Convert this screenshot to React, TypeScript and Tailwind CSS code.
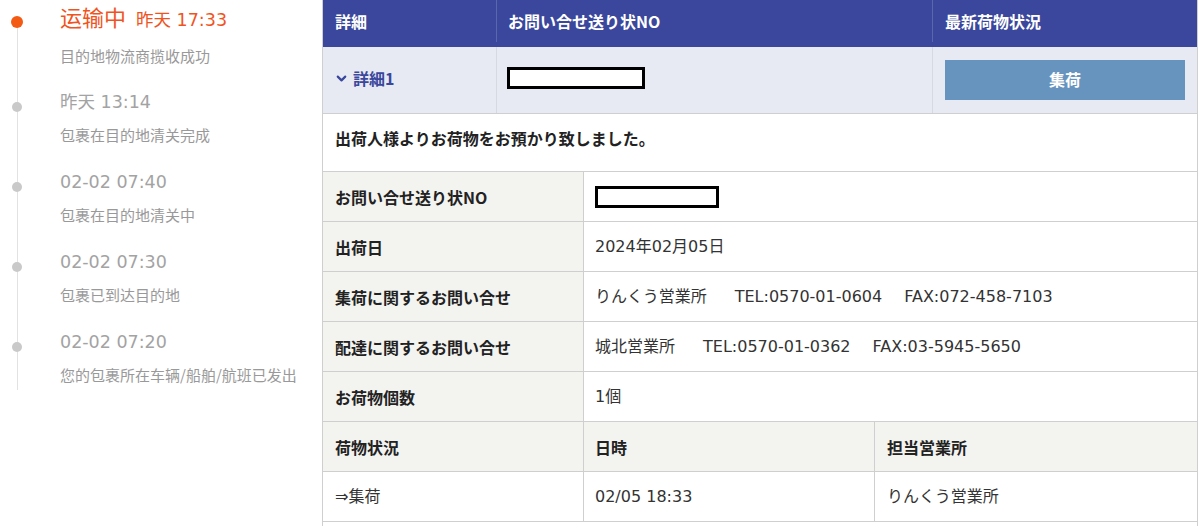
import { ChevronDown } from 'lucide-react'

const jp = { fontFamily: '"Noto Sans CJK JP", "Noto Sans", sans-serif' }
const sc = { fontFamily: '"Noto Sans CJK SC", "Noto Sans", sans-serif' }
// digits in the source are wide, closer to Verdana than Noto
const num = { fontFamily: '"DejaVu Sans", "Noto Sans CJK JP", sans-serif' }
const numSc = { fontFamily: '"DejaVu Sans", "Noto Sans CJK SC", sans-serif' }

const steps = [
  { time: '昨天 13:14', desc: '包裹在目的地清关完成' },
  { time: '02-02 07:40', desc: '包裹在目的地清关中' },
  { time: '02-02 07:30', desc: '包裹已到达目的地' },
  { time: '02-02 07:20', desc: '您的包裹所在车辆/船舶/航班已发出' },
]

function Timeline() {
  return (
    <div className="relative w-[322px] shrink-0" style={sc}>
      {/* line */}
      <div className="absolute left-[17px] top-[22px] h-[368px] w-px bg-[#e2e2e2]" />
      <div className="relative h-[88px] pl-[60px]">
        <span className="absolute left-[11px] top-[16px] h-3 w-3 rounded-full bg-[#f35a14]" />
        <div className="flex items-baseline pt-[2px] leading-[28px] text-[#f0541e]">
          <span className="text-[22px]">运输中</span>
          <span className="ml-[10px] text-[17.5px]" style={numSc}>昨天 17:33</span>
        </div>
        <p className="mt-[12px] text-[15px] leading-[20px] text-[#999]">目的地物流商揽收成功</p>
      </div>
      {steps.map((s) => (
        <div key={s.time} className="relative h-[80px] pl-[60px]">
          <span className="absolute left-[12px] top-[14px] h-[10px] w-[10px] rounded-full bg-[#c9c9c9]" />
          <p className="text-[17.5px] leading-[28px] text-[#a3a3a3]" style={numSc}>{s.time}</p>
          <p className="mt-[9px] text-[15px] leading-[20px] text-[#999]">{s.desc}</p>
        </div>
      ))}
    </div>
  )
}

function Redacted({ w }: { w: string }) {
  return <span className={`block h-[22px] ${w} border-[3px] border-black bg-white`} />
}

function DetailRow({ label, children }: { label: string; children: React.ReactNode }) {
  return (
    <div className="flex h-[50px] border-b border-[#cfcfcf]">
      <div className="flex w-[261px] shrink-0 items-center border-r border-[#cfcfcf] bg-[#f3f3f0] px-[12px] text-[16px] font-bold text-[#222]">
        {label}
      </div>
      <div className="flex flex-1 items-center px-[11px] text-[16px] text-[#333]" style={num}>
        {children}
      </div>
    </div>
  )
}

function Tracking() {
  return (
    <div className="w-[876px] shrink-0 border-x border-[#cfcfcf]" style={jp}>
      {/* header */}
      <div className="flex h-[47px] bg-[#3a479c] pb-[5px] text-[16px] font-bold text-white">
        <div className="flex w-[174px] items-center border-r border-[#5a66ad] px-[12px]">詳細</div>
        <div className="flex w-[436px] items-center border-r border-[#5a66ad] px-[11px]">お問い合せ送り状NO</div>
        <div className="flex flex-1 items-center px-[12px]">最新荷物状況</div>
      </div>

      <div className="flex h-[67px] border-b border-[#cfcfcf] bg-[#e8eaf3]">
        <div className="flex w-[174px] items-center gap-[4px] border-r border-[#d6d9e4] px-[11px] pb-[4px] text-[16px] font-bold text-[#3a479c]">
          <ChevronDown className="h-[15px] w-[15px]" strokeWidth={3.5} />
          詳細1
        </div>
        <div className="flex w-[436px] items-center border-r border-[#d6d9e4] px-[10px] pb-[5px]">
          <Redacted w="w-[138px]" />
        </div>
        <div className="flex flex-1 items-center px-[12px]">
          <div className="flex h-[40px] w-full items-center justify-center bg-[#6794be] pb-[3px] text-[16px] font-bold text-white">
            集荷
          </div>
        </div>
      </div>

      <div className="flex h-[58px] items-center border-b border-[#cfcfcf] px-[12px] pb-[9px] text-[16px] font-bold text-[#222]">
        出荷人様よりお荷物をお預かり致しました。
      </div>

      <DetailRow label="お問い合せ送り状NO">
        <Redacted w="w-[124px]" />
      </DetailRow>
      <DetailRow label="出荷日">2024年02月05日</DetailRow>
      <DetailRow label="集荷に関するお問い合せ">
        <span>りんくう営業所</span>
        <span className="ml-[28px]">TEL:0570-01-0604</span>
        <span className="ml-[22px]">FAX:072-458-7103</span>
      </DetailRow>
      <DetailRow label="配達に関するお問い合せ">
        <span>城北営業所</span>
        <span className="ml-[28px]">TEL:0570-01-0362</span>
        <span className="ml-[22px]">FAX:03-5945-5650</span>
      </DetailRow>
      <DetailRow label="お荷物個数">1個</DetailRow>

      <div className="flex h-[50px] border-b border-[#cfcfcf] bg-[#f3f3f0] text-[16px] font-bold text-[#222]">
        <div className="flex w-[261px] items-center border-r border-[#cfcfcf] px-[12px]">荷物状況</div>
        <div className="flex w-[291px] items-center border-r border-[#cfcfcf] px-[11px]">日時</div>
        <div className="flex flex-1 items-center px-[12px]">担当営業所</div>
      </div>
      <div className="flex h-[50px] border-b border-[#cfcfcf] text-[16px] text-[#333]" style={num}>
        <div className="flex w-[261px] items-center border-r border-[#cfcfcf] px-[12px]">⇒集荷</div>
        <div className="flex w-[291px] items-center border-r border-[#cfcfcf] px-[11px]">02/05 18:33</div>
        <div className="flex flex-1 items-center px-[12px]">りんくう営業所</div>
      </div>
    </div>
  )
}

export default function App() {
  return (
    <div className="flex h-[526px] w-[1198px] overflow-hidden bg-white">
      <Timeline />
      <Tracking />
    </div>
  )
}
